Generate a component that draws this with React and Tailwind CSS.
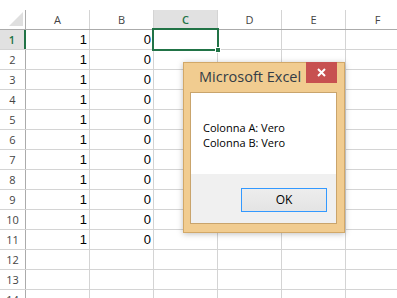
import React from 'react';

const COLS = ['A', 'B', 'C', 'D', 'E', 'F'];
const ROWS = Array.from({ length: 14 }, (_, i) => i + 1);

const cellValue = (row, col) => {
  if (row > 11) return '';
  if (col === 'A') return '1';
  if (col === 'B') return '0';
  return '';
};

const HeaderRow = () => (
  <div className="flex h-[20px] border-b border-[#ababab] bg-white">
    <div className="relative w-[26px] shrink-0 border-r border-[#ababab]">
      <div className="absolute right-[2px] bottom-[3px] w-0 h-0 border-l-[14px] border-l-transparent border-b-[14px] border-b-[#dfdfdf]" />
    </div>
    {COLS.map((c) => (
      <div
        key={c}
        className={`w-[64px] shrink-0 border-r border-[#d4d4d4] flex items-center justify-center text-[11px] leading-[19px] ${
          c === 'C' ? 'bg-[#e1e1e1] text-[#217346] font-semibold' : 'text-[#444]'
        }`}
      >
        {c}
      </div>
    ))}
  </div>
);

const Row = ({ n }) => (
  <div className="flex h-[20px] border-b border-[#d4d4d4] shrink-0">
    <div
      className={`w-[26px] shrink-0 flex items-center justify-center text-[11px] leading-[19px] ${
        n === 1
          ? 'bg-[#e1e1e1] text-[#217346] font-semibold border-r-2 border-[#217346]'
          : 'text-[#444] border-r border-[#ababab]'
      }`}
    >
      {n}
    </div>
    {COLS.map((c) => (
      <div
        key={c}
        className="w-[64px] shrink-0 border-r border-[#d4d4d4] flex items-center justify-end pr-[2px] text-[13px] leading-[19px] text-black"
        style={{ fontFamily: '"Liberation Sans", Arial, sans-serif' }}
      >
        {cellValue(n, c)}
      </div>
    ))}
  </div>
);

const MsgBox = () => (
  <div className="absolute left-[183px] top-[62px] w-[162px] h-[171px] bg-[#f1cc90] border border-[#d2a868] shadow-[0_1px_6px_rgba(0,0,0,0.25)] flex flex-col">
    <div className="relative h-[29px] shrink-0">
      <span className="absolute left-[15px] top-[5px] text-[14.5px] leading-[18px] text-[#333c46]">Microsoft Excel</span>
      <div className="absolute right-[7px] top-[-1px] w-[31px] h-[21px] bg-[#c75050] flex items-center justify-center">
        <svg width="9" height="9" viewBox="0 0 9 9">
          <path d="M1 1 L8 8 M8 1 L1 8" stroke="#fff" strokeWidth="2" />
        </svg>
      </div>
    </div>
    <div className="ml-[6px] w-[147px] h-[132px] border border-[#c9a46c] flex flex-col">
      <div className="h-[81px] bg-white pl-[12px] pt-[27px] text-[11px] leading-[15px] text-black">
        <div>Colonna A: Vero</div>
        <div>Colonna B: Vero</div>
      </div>
      <div className="flex-1 bg-[#f0f0f0] flex justify-end items-start pt-[14px] pr-[9px]">
        <div className="w-[86px] h-[24px] border border-[#3399ff] bg-gradient-to-b from-[#ededed] to-[#e4e4e4] flex items-center justify-center text-[12px] text-black">
          OK
        </div>
      </div>
    </div>
  </div>
);

export default function App() {
  return (
    <div
      className="relative w-[397px] h-[298px] overflow-hidden bg-white"
      style={{ fontFamily: '"Open Sans", "Noto Sans", sans-serif' }}
    >
      <div className="h-[10px]" />
      <HeaderRow />
      {ROWS.map((n) => (
        <Row key={n} n={n} />
      ))}
      {/* active cell selection */}
      <div className="absolute left-[152px] top-[28px] w-[67px] h-[23px] border-2 border-[#217346]" />
      <div className="absolute left-[215px] top-[47px] w-[6px] h-[6px] bg-[#217346] border border-white" />
      <MsgBox />
    </div>
  );
}
